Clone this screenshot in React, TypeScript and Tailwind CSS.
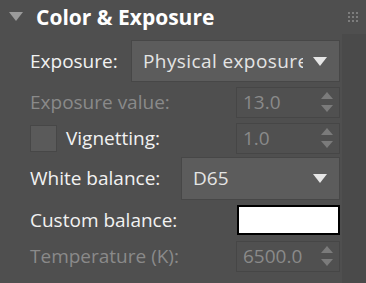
import React from 'react';

function SpinArrows() {
  return (
    <svg width="12" height="22" viewBox="0 0 12 22" className="ml-auto mr-[6px] shrink-0">
      <polygon points="6,0 12,7 0,7" fill="#7b7b7b" />
      <polygon points="0,13 12,13 6,20" fill="#7b7b7b" />
    </svg>
  );
}

function SpinBox({ value }: { value: string }) {
  return (
    <div className="ml-auto flex h-[31px] w-[104px] shrink-0 items-center border border-[#464646] bg-[#505050] pl-[6px] text-[#8a8a8a]">
      <span>{value}</span>
      <SpinArrows />
    </div>
  );
}

function DropArrow() {
  return (
    <svg width="14" height="9" viewBox="0 0 14 9" className="ml-auto shrink-0">
      <polygon points="0,0 14,0 7,9" fill="#e6e6e6" />
    </svg>
  );
}

export default function App() {
  return (
    <div
      className="relative h-[283px] w-[366px] overflow-hidden bg-[#4f4f4f] text-[19px] text-[#f2f2f2]"
      style={{ fontFamily: '"Open Sans", "Noto Sans", sans-serif' }}
    >
      {/* header */}
      <div className="flex h-[34px] items-center pl-[9px] pr-[8px]">
        <svg width="14" height="9" viewBox="0 0 14 9" className="mt-[-2px]">
          <polygon points="0,0 14,0 7,9" fill="#9a9a9a" />
        </svg>
        <span className="ml-[13px] whitespace-nowrap text-[21px] font-bold leading-none text-white">
          Color &amp; Exposure
        </span>
        <div className="ml-auto grid grid-cols-3 gap-[2px]">
          {Array.from({ length: 9 }).map((_, i) => (
            <div key={i} className="h-[2px] w-[2px] bg-[#7d7d7d]" />
          ))}
        </div>
      </div>

      <div className="absolute right-0 top-[34px] h-[249px] w-[24px] bg-[#4a4a4a]" />

      <div className="relative mt-[6px] flex w-[340px] flex-col gap-[5px] pl-[30px]">
        <div className="flex h-[42px] items-center">
          <span className="whitespace-nowrap">Exposure:</span>
          <div className="ml-auto flex h-[42px] w-[209px] shrink-0 items-center border border-[#474747] bg-[#5c5c5c] pl-[11px] pr-[12px]">
            <span className="w-[160px] shrink-0 overflow-hidden whitespace-nowrap tracking-[0.4px] text-[#e4e4e4]">
              Physical exposure
            </span>
            <DropArrow />
          </div>
        </div>

        <div className="flex h-[31px] items-center text-[#8a8a8a]">
          <span className="whitespace-nowrap">Exposure value:</span>
          <SpinBox value="13.0" />
        </div>

        <div className="flex h-[31px] items-center">
          <div className="h-[27px] w-[27px] shrink-0 border border-[#474747] bg-[#5a5a5a]" />
          <span className="ml-[9px] whitespace-nowrap">Vignetting:</span>
          <SpinBox value="1.0" />
        </div>

        <div className="mt-[-2px] flex h-[43px] items-center">
          <span className="whitespace-nowrap">White balance:</span>
          <div className="ml-auto flex h-[43px] w-[159px] shrink-0 items-center border border-[#474747] bg-[#5c5c5c] pl-[11px] pr-[12px]">
            <span className="text-[#e4e4e4]">D65</span>
            <DropArrow />
          </div>
        </div>

        <div className="flex h-[30px] items-center">
          <span className="whitespace-nowrap">Custom balance:</span>
          <div className="ml-auto h-[30px] w-[103px] shrink-0 border-2 border-black bg-white" />
        </div>

        <div className="mt-[1px] flex h-[31px] items-center text-[#8a8a8a]">
          <span className="whitespace-nowrap">Temperature (K):</span>
          <SpinBox value="6500.0" />
        </div>
      </div>
    </div>
  );
}
